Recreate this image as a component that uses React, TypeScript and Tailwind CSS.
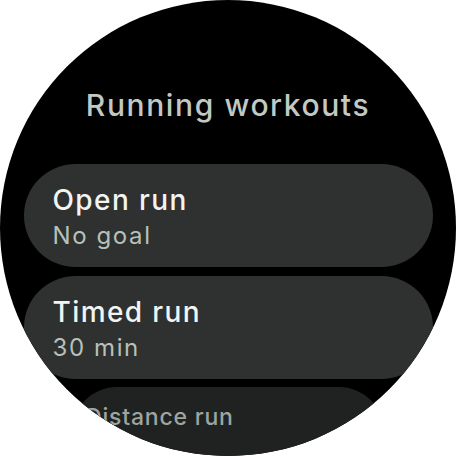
import React from "react";

const font = { fontFamily: "Inter, Roboto, 'Noto Sans', sans-serif" };

function Card({ label, sub }: { label: string; sub: string }) {
  return (
    <div className="w-[409px] h-[103px] shrink-0 rounded-full bg-[#2e3130] pl-[29px] pt-[19px] flex flex-col">
      <div className="text-[28px] leading-[34px] font-medium tracking-[1.4px] text-[#f2f4f3]">{label}</div>
      <div className="text-[24px] leading-[30px] mt-[4px] tracking-[1.6px] text-[#b7c0bb]">{sub}</div>
    </div>
  );
}

export default function App() {
  return (
    <div className="w-[456px] h-[456px] bg-white" style={font}>
      <div className="w-[456px] h-[456px] rounded-full bg-black overflow-hidden flex flex-col items-center">
        <div className="pt-[87px] text-[30px] leading-[36px] font-medium tracking-[1.6px] text-[#c0c9c4]">Running workouts</div>
        <div className="mt-[41px] flex flex-col items-center gap-[9px]">
          <Card label="Open run" sub="No goal" />
          <Card label="Timed run" sub="30 min" />
          <div className="w-[312px] h-[90px] shrink-0 rounded-full bg-[#202221] pl-[13px] pt-[16px] mt-[-1px]">
            <div className="text-[23px] leading-[28px] font-medium tracking-[0.8px] text-[#9ea5a1]">Distance run</div>
          </div>
        </div>
      </div>
    </div>
  );
}
